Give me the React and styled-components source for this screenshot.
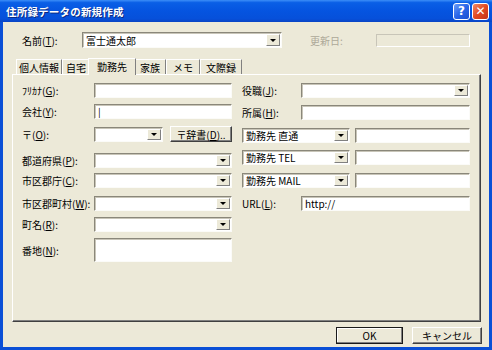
import React from 'react'
import styled, { createGlobalStyle } from 'styled-components'

const Global = createGlobalStyle`
    body { margin: 0; background: #fff; }
    * { box-sizing: border-box; }
`

const Window = styled.div`
    width: 492px;
    height: 350px;
    display: flex;
    flex-direction: column;
    background: #0a4fd6;
    font-family: "Noto Sans CJK JP", "Noto Sans", sans-serif;
    font-size: 10px;
    color: #000;
    overflow: hidden;
`

const TitleBar = styled.div`
    height: 22px;
    flex: none;
    display: flex;
    align-items: center;
    padding: 0 3px 0 6px;
    background: linear-gradient(to bottom, #3c8ef8 0%, #0a5fe6 12%, #0554e0 50%, #0650da 85%, #0a44c4 100%);
`

const TitleText = styled.div`
    flex: 1;
    color: #fff;
    font-weight: bold;
    font-size: 10.5px;
    text-shadow: 1px 1px 0 #0a2a80;
    letter-spacing: 0.2px;
`

const CapButton = styled.div`
    width: 17px;
    height: 17px;
    margin-left: 2px;
    border: 1px solid #fff;
    border-radius: 3px;
    display: flex;
    align-items: center;
    justify-content: center;
    color: #fff;
    font-family: "DejaVu Sans", sans-serif;
    font-weight: bold;
    font-size: 12px;
    background: ${p => p.$close
        ? 'linear-gradient(135deg, #f08a66 0%, #e04a22 50%, #c4341a 100%)'
        : 'linear-gradient(135deg, #6a9cf8 0%, #2a66e8 50%, #1a4ed0 100%)'};
`

const Body = styled.div`
    flex: 1;
    margin: 0 3px 3px 3px;
    background: #ece9d8;
    padding: 10px 8px 0 9px;
    display: flex;
    flex-direction: column;
`

const HeaderRow = styled.div`
    display: flex;
    align-items: center;
    padding-left: 10px;
    height: 16px;
`

const Label = styled.div`
    width: ${p => p.$w}px;
    margin-left: ${p => p.$ml || 0}px;
    flex: none;
    white-space: nowrap;
    color: ${p => p.$disabled ? '#aca899' : '#000'};
    u { text-decoration: underline; }
`

const Field = styled.div`
    position: relative;
    width: ${p => p.$w}px;
    height: ${p => p.$h || 15}px;
    flex: none;
    background: #fff;
    border: 1px solid;
    border-color: #8a877a #fbfbf8 #fbfbf8 #8a877a;
    box-shadow: inset 1px 1px 0 #c8c5b8;
    padding: 0 3px;
    display: flex;
    align-items: center;
    font-size: 10px;
    white-space: nowrap;
    overflow: hidden;
`

const DisabledBox = styled.div`
    width: ${p => p.$w}px;
    height: 13px;
    border: 1px solid;
    border-color: #c8c5b8 #fff #fff #c8c5b8;
    background: #ece9d8;
`

const DropBtn = styled.div`
    position: absolute;
    right: 1px;
    top: 1px;
    bottom: 1px;
    width: 14px;
    background: #ece9d8;
    border: 1px solid;
    border-color: #fff #808080 #808080 #fff;
    display: flex;
    align-items: center;
    justify-content: center;
    &::after {
        content: '';
        border-left: 3px solid transparent;
        border-right: 3px solid transparent;
        border-top: 3px solid #000;
    }
`

const TabStrip = styled.div`
    margin-top: 10px;
    height: 16px;
    display: flex;
    align-items: flex-end;
    padding-left: 4px;
    position: relative;
    z-index: 1;
`

const Tab = styled.div`
    width: ${p => p.$w}px;
    height: ${p => p.$active ? 17 : 15}px;
    margin-bottom: ${p => p.$active ? -1 : 0}px;
    margin-left: ${p => p.$active ? -2 : 0}px;
    margin-right: ${p => p.$active ? -2 : 0}px;
    background: #ece9d8;
    border-top: 1px solid #fff;
    border-left: 1px solid #fff;
    border-right: 1px solid #808080;
    display: flex;
    align-items: center;
    justify-content: center;
    padding-bottom: ${p => p.$active ? 2 : 0}px;
    white-space: nowrap;
    z-index: ${p => p.$active ? 2 : 1};
`

const Panel = styled.div`
    height: 248px;
    border: 1px solid;
    border-color: #fff #404040 #404040 #fff;
    box-shadow: inset -1px -1px 0 #808080;
    padding: 8px 0 0 9px;
    display: flex;
    gap: 10px;
`

const Column = styled.div`
    width: ${p => p.$w}px;
    display: flex;
    flex-direction: column;
`

const Row = styled.div`
    display: flex;
    align-items: ${p => p.$top ? 'flex-start' : 'center'};
    margin-top: ${p => p.$mt || 0}px;
    gap: ${p => p.$gap || 0}px;
`

const PushButton = styled.div`
    width: ${p => p.$w}px;
    height: ${p => p.$h || 17}px;
    flex: none;
    display: flex;
    align-items: center;
    justify-content: center;
    background: #ece9d8;
    border: 1px solid;
    border-color: ${p => p.$default ? '#1a1a1a' : '#fff #404040 #404040 #fff'};
    box-shadow: ${p => p.$default
        ? 'inset -1px -1px 0 #808080, inset 1px 1px 0 #fff'
        : 'inset -1px -1px 0 #808080'};
    white-space: nowrap;
    font-size: 10px;
`

const Footer = styled.div`
    display: flex;
    justify-content: flex-end;
    gap: 9px;
    padding-top: 5px;
    margin-right: -1px;
`

function Combo({ w, h, children }) {
    return (
        <Field $w={w} $h={h}>
            {children}
            <DropBtn />
        </Field>
    )
}

const tabs = [
    { name: '個人情報', w: 46 },
    { name: '自宅', w: 28 },
    { name: '勤務先', w: 48, active: true },
    { name: '家族', w: 32 },
    { name: 'メモ', w: 34 },
    { name: '文際録', w: 42 },
]

export default function App() {
    return (
        <Window>
            <Global />
            <TitleBar>
                <TitleText>住所録データの新規作成</TitleText>
                <CapButton>?</CapButton>
                <CapButton $close>✕</CapButton>
            </TitleBar>
            <Body>
                <HeaderRow>
                    <Label $w={60}>名前(<u>T</u>):</Label>
                    <Combo w={200} h={16}>富士通太郎</Combo>
                    <Label $w={66} $ml={28} $disabled>更新日:</Label>
                    <DisabledBox $w={94} />
                </HeaderRow>

                <TabStrip>
                    {tabs.map(t => (
                        <Tab key={t.name} $w={t.w} $active={t.active}>{t.name}</Tab>
                    ))}
                </TabStrip>

                <Panel>
                    <Column $w={210}>
                        <Row>
                            <Label $w={72}>ﾌﾘｶﾅ(<u>G</u>):</Label>
                            <Field $w={138} />
                        </Row>
                        <Row $mt={6}>
                            <Label $w={72}>会社(<u>Y</u>):</Label>
                            <Field $w={138}>|</Field>
                        </Row>
                        <Row $mt={7}>
                            <Label $w={72}>〒(<u>O</u>):</Label>
                            <Combo w={69} />
                            <PushButton $w={62} $h={16} style={{ marginLeft: 7 }}>〒辞書(<u>D</u>)..</PushButton>
                        </Row>
                        <Row $mt={11}>
                            <Label $w={72}>都道府県(<u>P</u>):</Label>
                            <Combo w={138} />
                        </Row>
                        <Row $mt={5}>
                            <Label $w={72}>市区郡庁(<u>C</u>):</Label>
                            <Combo w={138} />
                        </Row>
                        <Row $mt={8}>
                            <Label $w={72}>市区郡町村(<u>W</u>):</Label>
                            <Combo w={138} />
                        </Row>
                        <Row $mt={6}>
                            <Label $w={72}>町名(<u>R</u>):</Label>
                            <Combo w={138} />
                        </Row>
                        <Row $mt={6} $top>
                            <Label $w={72} style={{ marginTop: 5 }}>番地(<u>N</u>):</Label>
                            <Field $w={138} $h={24} />
                        </Row>
                    </Column>

                    <Column $w={228}>
                        <Row>
                            <Label $w={59}>役職(<u>J</u>):</Label>
                            <Combo w={169} />
                        </Row>
                        <Row $mt={7}>
                            <Label $w={59}>所属(<u>H</u>):</Label>
                            <Field $w={169} />
                        </Row>
                        <Row $mt={8} $gap={5}>
                            <Combo w={108}>勤務先 直通</Combo>
                            <Field $w={115} />
                        </Row>
                        <Row $mt={7} $gap={5}>
                            <Combo w={108}>勤務先 TEL</Combo>
                            <Field $w={115} />
                        </Row>
                        <Row $mt={8} $gap={5}>
                            <Combo w={108}>勤務先 MAIL</Combo>
                            <Field $w={115} />
                        </Row>
                        <Row $mt={8}>
                            <Label $w={59}>URL(<u>L</u>):</Label>
                            <Field $w={169}>http://</Field>
                        </Row>
                    </Column>
                </Panel>

                <Footer>
                    <PushButton $w={67} $default>OK</PushButton>
                    <PushButton $w={70}>キャンセル</PushButton>
                </Footer>
            </Body>
        </Window>
    )
}
